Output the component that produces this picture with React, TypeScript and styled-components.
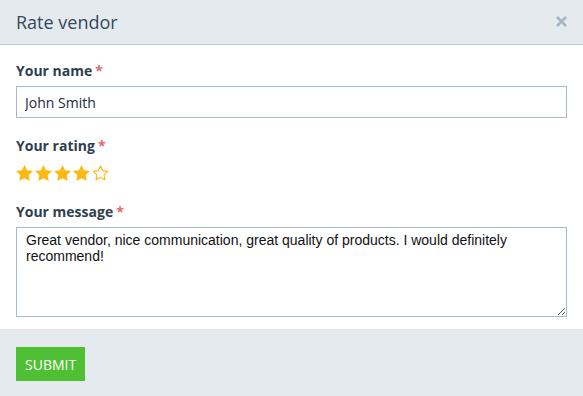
import React from "react";
import styled, { createGlobalStyle } from "styled-components";

const Global = createGlobalStyle`
  html, body { margin: 0; padding: 0; background: #ffffff; }
  body { font-family: "Open Sans", "Liberation Sans", sans-serif; }
  * { box-sizing: border-box; }
`;

const Modal = styled.div`
  width: 583px;
  height: 396px;
  display: flex;
  flex-direction: column;
  background: #ffffff;
  overflow: hidden;
`;

const Header = styled.div`
  height: 45px;
  flex: none;
  display: flex;
  align-items: center;
  justify-content: space-between;
  padding: 0 16px 1px 16px;
  background: #e5eaef;
  border-bottom: 1px solid #b9c8d7;
`;

const Title = styled.h1`
  margin: 0;
  font-size: 18px;
  font-weight: 400;
  color: #34495e;
  line-height: 24px;
`;

const Close = styled.button`
  border: 0;
  background: none;
  padding: 0;
  width: 12px;
  height: 12px;
  display: flex;
  align-items: center;
  justify-content: center;
  cursor: pointer;
`;

const Body = styled.div`
  flex: none;
  padding: 16px 16px 12px 16px;
  display: flex;
  flex-direction: column;
`;

const Field = styled.div<{ $mb: number }>`
  display: flex;
  flex-direction: column;
  margin-bottom: ${(p) => p.$mb}px;
`;

const Label = styled.label`
  font-size: 14px;
  font-weight: 700;
  line-height: 20px;
  color: #2f3e4e;
  margin-bottom: 5px;
`;

const Req = styled.span`
  color: #e8676a;
  font-weight: 700;
  margin-left: 3px;
`;

const Input = styled.input`
  height: 32px;
  width: 100%;
  border: 1px solid #a9bacc;
  padding: 0 8px;
  font-family: "Open Sans", sans-serif;
  font-size: 14px;
  color: #1b2a3d;
  outline: none;
`;

const StarRow = styled.div`
  display: flex;
  gap: 2px;
  padding-top: 4px;
  height: 20px;
`;

const TextArea = styled.textarea`
  width: 100%;
  height: 90px;
  border: 1px solid #a9bacc;
  padding: 4px 9px;
  font-family: "Liberation Sans", Arial, sans-serif;
  font-size: 14px;
  line-height: 16px;
  color: #111111;
  outline: none;
  resize: vertical;
  display: block;
`;

const Footer = styled.div`
  flex: 1;
  background: #e5eaef;
  border-top: 1px solid #dbe2e8;
  padding: 17px 16px;
`;

const Submit = styled.button`
  height: 34px;
  padding: 0 9px;
  border: 0;
  background: #4fbf33;
  color: #ffffff;
  font-family: "Open Sans", sans-serif;
  font-size: 14px;
  text-transform: uppercase;
  cursor: pointer;
`;

const Star: React.FC<{ filled: boolean }> = ({ filled }) => (
  <svg width="17" height="16" viewBox="2 2 20 19.1">
    <polygon
      points="12,2 15.09,8.26 22,9.27 17,14.14 18.18,21.02 12,17.77 5.82,21.02 7,14.14 2,9.27 8.91,8.26"
      fill={filled ? "#fdb913" : "#ffffff"}
      stroke="#fdb913"
      strokeWidth={filled ? 0 : 1.6}
      strokeLinejoin="round"
      transform={filled ? undefined : "translate(12 11.5) scale(0.86) translate(-12 -11.5)"}
    />
  </svg>
);

export default function App() {
  const rating = 4;
  return (
    <>
      <Global />
      <Modal>
        <Header>
          <Title>Rate vendor</Title>
          <Close aria-label="Close">
            <svg width="11" height="11" viewBox="0 0 11 11">
              <path d="M1 1 L10 10 M10 1 L1 10" stroke="#a5b5c6" strokeWidth="2.6" strokeLinecap="butt" />
            </svg>
          </Close>
        </Header>
        <Body>
          <Field $mb={18}>
            <Label>
              Your name<Req>*</Req>
            </Label>
            <Input defaultValue="John Smith" />
          </Field>
          <Field $mb={21}>
            <Label>
              Your rating<Req>*</Req>
            </Label>
            <StarRow>
              {[1, 2, 3, 4, 5].map((i) => (
                <Star key={i} filled={i <= rating} />
              ))}
            </StarRow>
          </Field>
          <Field $mb={0}>
            <Label>
              Your message<Req>*</Req>
            </Label>
            <TextArea defaultValue="Great vendor, nice communication, great quality of products. I would definitely recommend!" />
          </Field>
        </Body>
        <Footer>
          <Submit>Submit</Submit>
        </Footer>
      </Modal>
    </>
  );
}
